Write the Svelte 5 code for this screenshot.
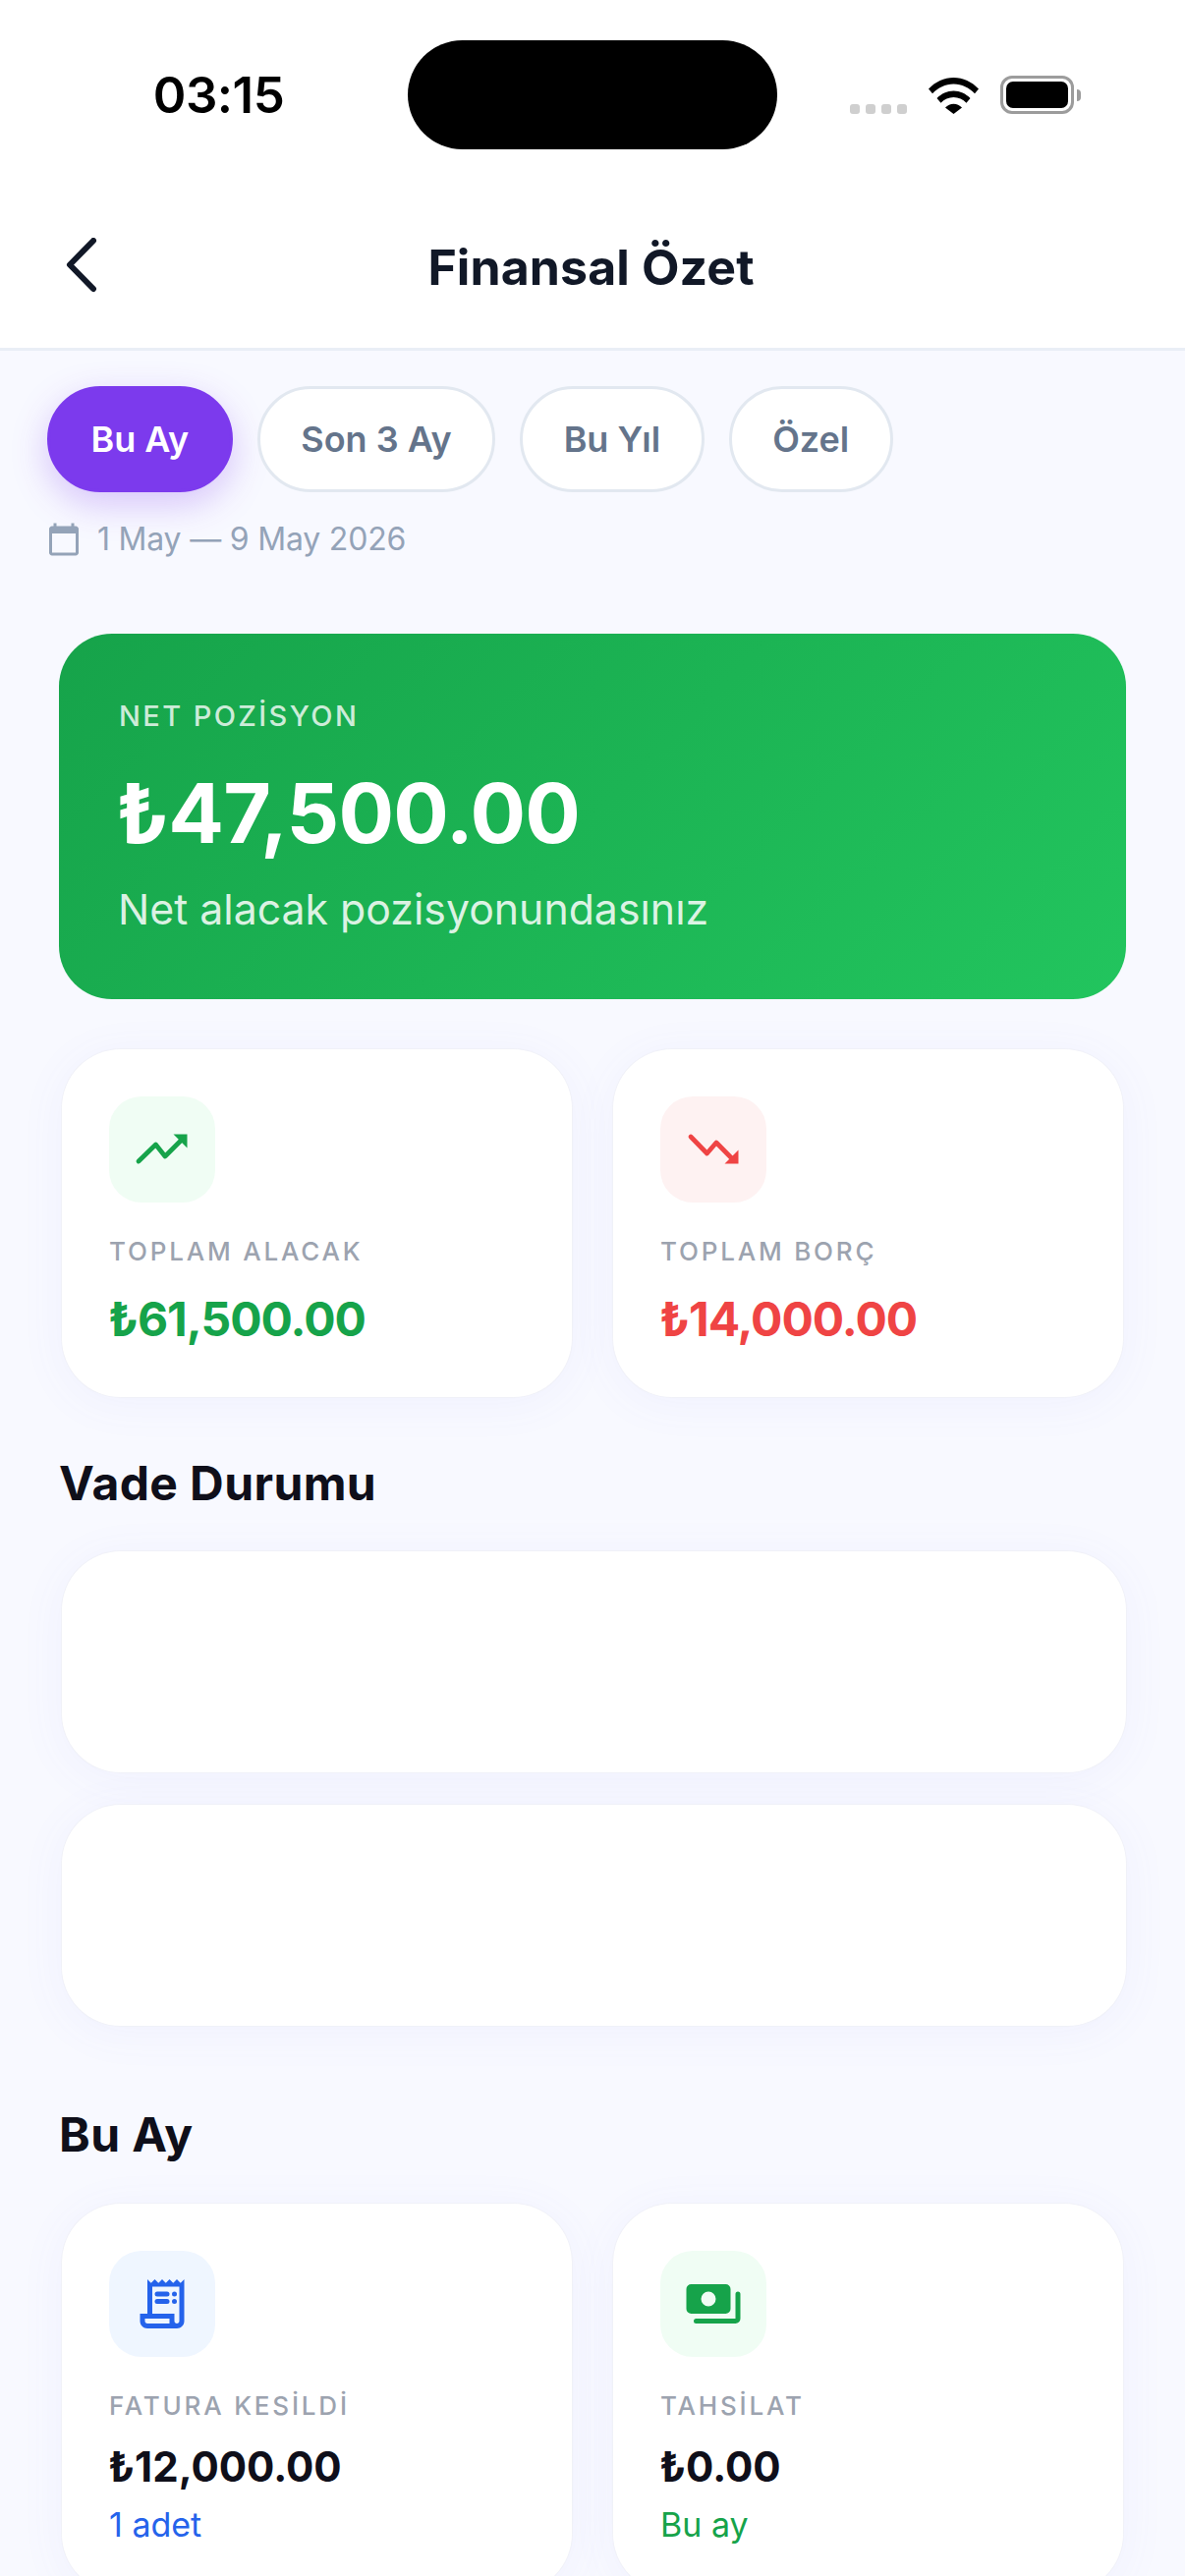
<script lang="ts">
  // Finansal Özet screen: period filter, net position and monthly summary cards.
  const periods = ['Bu Ay', 'Son 3 Ay', 'Bu Yıl', 'Özel'];
  let activePeriod = $state('Bu Ay');

  const totals = [
    { kind: 'up', tone: 'green', label: 'TOPLAM ALACAK', value: '₺61,500.00' },
    { kind: 'down', tone: 'red', label: 'TOPLAM BORÇ', value: '₺14,000.00' },
  ];

  const month = [
    { kind: 'receipt', tone: 'blue', label: 'FATURA KESİLDİ', value: '₺12,000.00', note: '1 adet' },
    { kind: 'cash', tone: 'green', label: 'TAHSİLAT', value: '₺0.00', note: 'Bu ay' },
  ];
</script>

{#snippet statIcon(kind: string)}
  <svg class="glyph" viewBox="0 0 24 24" width="60" height="60" aria-hidden="true">
    {#if kind === 'up'}
      <path class="line" d="M2.4 16.8 9.400 10l3.800 4.800 6.300-6.300" />
      <path d="M16.600 5.800H22.200v5.600z" />
    {:else if kind === 'down'}
      <path class="line" d="M2.800 6.800l6.600 6.800 3.800-4.400 6.300 6.400" />
      <path d="M22.200 12.200v5.600h-5.600z" />
    {:else if kind === 'receipt'}
      <path d="M19.500 3.500 18 2l-1.500 1.500L15 2l-1.500 1.500L12 2l-1.500 1.500L9 2 7.500 3.500 6 2v14H3v3c0 1.660 1.340 3 3 3h12c1.660 0 3-1.340 3-3V2l-1.500 1.500zM15 20H6c-.55 0-1-.45-1-1v-1h10v2zm4-1c0 .55-.45 1-1 1s-1-.45-1-1v-3H8V5h11v14z" />
      <rect x="9" y="7" width="6" height="2" rx="1" />
      <rect x="16" y="7" width="2" height="2" rx="1" />
      <rect x="9" y="10" width="6" height="2" rx="1" />
      <rect x="16" y="10" width="2" height="2" rx="1" />
    {:else}
      <path fill-rule="evenodd" d="M3 4h14a2 2 0 0 1 2 2v8a2 2 0 0 1-2 2H3a2 2 0 0 1-2-2V6a2 2 0 0 1 2-2zm7 3a3 3 0 1 0 0 6 3 3 0 0 0 0-6z" />
      <path class="line wide" d="M5 19h16a1 1 0 0 0 1-1V8" />
    {/if}
  </svg>
{/snippet}

<div class="screen">
  <header class="top">
    <div class="status">
      <span class="time">03:15</span>
      <div class="island"></div>
      <div class="indicators">
        <div class="signal"><i></i><i></i><i></i><i></i></div>
        <svg class="wifi" viewBox="0 0 51 37" width="51" height="37" aria-hidden="true">
          <path d="M0 11.500C7 4.200 15.800 0 25.500 0S44 4.200 51 11.500l-4 4.700C41.300 10.300 34 6.500 25.500 6.500S9.700 10.300 4 16.200z" />
          <path d="M8.500 21C13 16.400 19 13.500 25.500 13.500S38 16.400 42.500 21l-4 4.700C35 22.300 30.500 20 25.500 20s-9.500 2.300-13 5.700z" />
          <path d="M17 30.500c2.300-2.300 5.300-3.700 8.500-3.700s6.200 1.400 8.500 3.700L25.500 37z" />
        </svg>
        <div class="battery"><div class="charge"></div></div>
        <div class="nub"></div>
      </div>
    </div>
    <nav class="nav">
      <svg class="back" viewBox="0 0 36 56" width="36" height="56" aria-hidden="true">
        <path d="M29 3 5 27.500 29 52" />
      </svg>
      <h1>Finansal Özet</h1>
    </nav>
  </header>

  <div class="filters">
    {#each periods as period}
      <button class="pill" class:active={period === activePeriod} onclick={() => (activePeriod = period)}>
        {period}
      </button>
    {/each}
  </div>

  <div class="range">
    <svg viewBox="0 0 24 24" width="36" height="36" aria-hidden="true">
      <path d="M20 3h-1V1h-2v2H7V1H5v2H4c-1.100 0-2 .9-2 2v16c0 1.100.9 2 2 2h16c1.100 0 2-.9 2-2V5c0-1.100-.9-2-2-2zm0 18H4V8h16v13z" />
    </svg>
    <span>1 May — 9 May 2026</span>
  </div>

  <section class="net">
    <div class="net-label">NET POZİSYON</div>
    <div class="net-value">₺47,500.00</div>
    <div class="net-note">Net alacak pozisyonundasınız</div>
  </section>

  <div class="grid totals">
    {#each totals as item}
      <article class="card {item.tone}">
        <div class="icon-box">{@render statIcon(item.kind)}</div>
        <div class="label">{item.label}</div>
        <div class="amount">{item.value}</div>
      </article>
    {/each}
  </div>

  <h2 class="due-title">Vade Durumu</h2>
  <div class="due">
    <div class="due-card"></div>
    <div class="due-card"></div>
  </div>

  <h2 class="month-title">Bu Ay</h2>
  <div class="grid month">
    {#each month as item}
      <article class="card {item.tone}">
        <div class="icon-box">{@render statIcon(item.kind)}</div>
        <div class="label">{item.label}</div>
        <div class="amount dark">{item.value}</div>
        <div class="note">{item.note}</div>
      </article>
    {/each}
  </div>
</div>

<style>
  :global(body) {
    margin: 0;
    background: #f8f9ff;
  }

  .screen {
    height: 2622px;
    overflow: hidden;
    background: #f8f9ff;
    font-family: 'Inter', 'Noto Sans', sans-serif;
  }

  .top {
    background: #fff;
    border-bottom: 3px solid #e9eef6;
    height: 354px;
  }

  .status {
    display: grid;
    grid-template-columns: 415px 376px 1fr;
    padding-top: 41px;
    height: 111px;
  }

  .time {
    justify-self: center;
    align-self: center;
    padding-left: 30px;
    font-size: 51px;
    font-weight: 600;
    letter-spacing: -0.5px;
    color: #000;
  }

  .island {
    background: #000;
    border-radius: 56px;
  }

  .indicators {
    display: flex;
    align-items: center;
    padding-left: 74px;
  }

  .signal {
    display: flex;
    gap: 6px;
    align-self: flex-end;
    margin-bottom: 36px;
  }

  .signal i {
    width: 10px;
    height: 10px;
    border-radius: 3px;
    background: #cfcfcf;
  }

  .wifi {
    margin-left: 22px;
    margin-top: 2px;
  }

  .battery {
    box-sizing: border-box;
    width: 75px;
    height: 39px;
    margin-left: 22px;
    padding: 3px;
    border: 3px solid #9c9c9c;
    border-radius: 12px;
  }

  .charge {
    height: 100%;
    background: #000;
    border-radius: 7px;
  }

  .nub {
    width: 4px;
    height: 12px;
    margin-left: 3px;
    background: #9c9c9c;
    border-radius: 0 6px 6px 0;
  }

  .nav {
    position: relative;
    height: 160px;
    margin-top: 38px;
    display: flex;
    align-items: center;
    justify-content: center;
  }

  .back {
    position: absolute;
    left: 66px;
    top: 52px;
    fill: none;
    stroke: #111827;
    stroke-width: 6;
    stroke-linecap: round;
    stroke-linejoin: round;
  }

  h1 {
    margin: 3px 0 0 -3px;
    font-size: 50px;
    font-weight: 700;
    letter-spacing: 0.1px;
    color: #111827;
  }

  .filters {
    display: flex;
    gap: 25px;
    padding: 36px 0 0 48px;
  }

  .pill {
    box-sizing: border-box;
    height: 108px;
    padding: 0 41.500px;
    border: 3px solid #e2e8f0;
    border-radius: 54px;
    background: #fff;
    color: #64748b;
    font-family: inherit;
    font-size: 36px;
    font-weight: 600;
  }

  .pill.active {
    border-color: #7c3aed;
    background: #7c3aed;
    color: #fff;
    box-shadow: 0 12px 36px rgba(124, 58, 237, 0.28);
  }

  .range {
    display: flex;
    align-items: center;
    gap: 16px;
    margin-top: 28px;
    padding-left: 47px;
    color: #94a3b8;
    font-size: 32px;
    letter-spacing: -0.2px;
  }

  .range svg {
    fill: #94a3b8;
  }

  .net {
    box-sizing: border-box;
    height: 372px;
    margin: 77px 60px 0;
    padding: 64px 61px 0;
    border-radius: 54px;
    background: linear-gradient(135deg, #16a34a, #22c55e);
    color: #fff;
  }

  .net-label {
    font-size: 29px;
    line-height: 40px;
    font-weight: 500;
    letter-spacing: 2.4px;
    color: rgba(255, 255, 255, 0.8);
  }

  .net-value {
    margin: 28px 0 0 -3px;
    font-size: 84px;
    line-height: 102px;
    font-weight: 700;
    letter-spacing: -0.8px;
  }

  .net-note {
    margin: 21px 0 0 -1px;
    font-size: 42.800px;
    line-height: 52px;
    color: rgba(255, 255, 255, 0.85);
  }

  .grid {
    display: grid;
    grid-template-columns: 519px 519px;
    gap: 42px;
    padding-left: 63px;
  }

  .totals {
    margin-top: 51px;
  }

  .card {
    box-sizing: border-box;
    height: 354px;
    padding: 48px;
    border-radius: 60px;
    background: #fff;
    box-shadow: 0 0 0 1px rgba(240, 241, 247, 0.9), 0 6px 48px rgba(99, 102, 241, 0.06);
  }

  .icon-box {
    width: 108px;
    height: 108px;
    border-radius: 33px;
    display: flex;
    align-items: center;
    justify-content: center;
  }

  .glyph .line {
    fill: none;
    stroke: currentColor;
    stroke-width: 1.900;
    stroke-linecap: round;
    stroke-linejoin: round;
  }

  .glyph .line.wide {
    stroke-width: 2;
  }

  .glyph {
    fill: currentColor;
  }

  .green .icon-box { background: #f0fdf4; color: #16a34a; }
  .red .icon-box { background: #fef2f2; color: #ef4444; }
  .blue .icon-box { background: #eff6ff; color: #2563eb; }

  .label {
    margin: 32px 0 0;
    font-size: 26px;
    line-height: 36px;
    font-weight: 500;
    letter-spacing: 2.800px;
    color: #9ca3af;
  }

  .amount {
    margin: 22px 0 0 -1px;
    font-size: 48px;
    line-height: 58px;
    font-weight: 700;
    letter-spacing: -1px;
  }

  .green .amount { color: #16a34a; }
  .red .amount { color: #ef4444; }
  .card .amount.dark {
    margin-top: 18px;
    font-size: 42px;
    line-height: 52px;
    letter-spacing: 0;
    color: #0f0f1a;
  }

  .note {
    margin: 12px 0 0;
    font-size: 34px;
    line-height: 42px;
  }

  .green .note { color: #16a34a; }
  .blue .note { color: #2563eb; }

  h2 {
    margin: 0;
    padding-left: 60px;
    font-size: 48px;
    line-height: 60px;
    font-weight: 700;
    letter-spacing: 0.4px;
    color: #0f0f1a;
  }

  .due-title {
    margin-top: 58px;
  }

  .due {
    display: flex;
    flex-direction: column;
    gap: 33px;
    margin-top: 39px;
    padding: 0 60px 0 63px;
  }

  .due-card {
    height: 225px;
    border-radius: 60px;
    background: #fff;
    box-shadow: 0 0 0 1px rgba(240, 241, 247, 0.9), 0 6px 48px rgba(99, 102, 241, 0.06);
  }

  .month-title {
    margin-top: 81px;
  }

  .month {
    margin-top: 40px;
  }

  .month .card {
    height: 396px;
  }
</style>
